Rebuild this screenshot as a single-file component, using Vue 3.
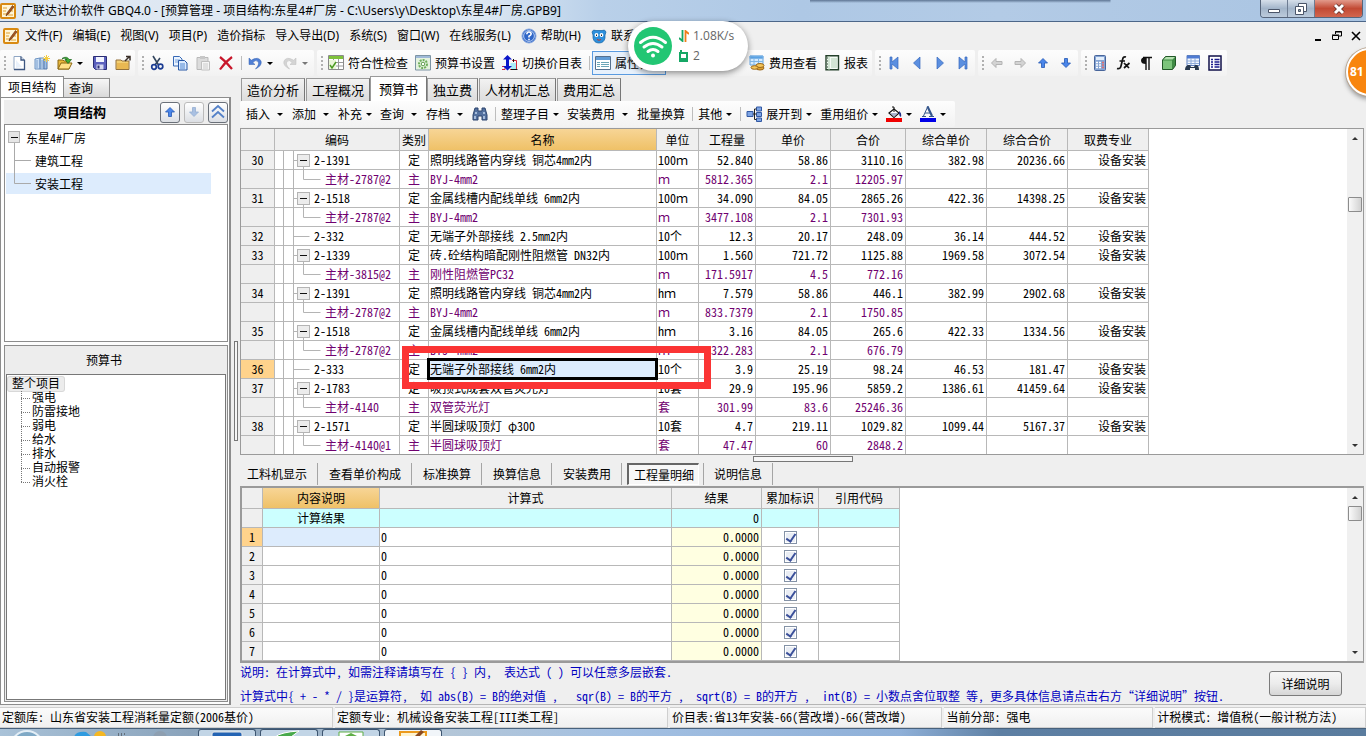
<script setup>
import { ref } from 'vue'

const I = {
  app: '<rect x="1" y="1" width="14" height="14" rx="1" fill="#fff6d8" stroke="#d98a12" stroke-width="2"/><path d="M3 5h4M3 8h3M3 11h5M8 12h5M11 8h2" stroke="#e0a030"/><path d="M12.500 2.500L7 10l-1 3 2.500-2L14 4z" fill="#a8541c" stroke="#5e2c0c" stroke-width=".6"/>',
  doc: '<path d="M3 1.500h7l3.500 3.500v9.500H3z" fill="#fff" stroke="#8fa6c4"/><path d="M10 1.500V5h3.500M13.500 5v9.500H3" fill="none" stroke="#3d5680" stroke-width="1.300"/><path d="M5 13V5l6 7z" fill="#e9f1fb"/>',
  books: '<path d="M1 4l5-1v11H1zM6 3h4v11H6z" fill="#c9def5" stroke="#6c93c2"/><path d="M10 4h3v10h-3z" fill="#9fbfe6" stroke="#5479ab"/><path d="M3 5v8M8 5v8" stroke="#7fa0cd"/><path d="M12.500 0v7M9 3.500h7M10 1l5 5M15 1l-5 5" stroke="#f5cd3e"/>',
  open: '<path d="M1 5h5l1 1h5v8H1z" fill="#e8b73c" stroke="#8a6712"/><path d="M1 14l3-6h11l-3 6z" fill="#ffe187" stroke="#8a6712"/><path d="M5 3.500q5-3 7 1h2.500L11 8.500 8 4.500h2q-2-2-5-1z" fill="#3fae32" stroke="#17631b" stroke-width=".7"/>',
  save: '<path d="M1.500 1.500h13v13h-11l-2-2z" fill="#5b60bd" stroke="#2a2c74"/><path d="M4 2h8v5H4z" fill="#f2f4ff"/><path d="M4.500 9.500h7v5h-7z" fill="#d5d7ef"/><path d="M5.500 10.500h2v3h-2z" fill="#2a2c74"/>',
  folder: '<path d="M1 5h5l1 1h7v8.500H1z" fill="#f3cf72" stroke="#94713a"/><path d="M2 8h11v6H2z" fill="#e9b852"/><path d="M10 6l4-4M11 1.500h4v4" fill="none" stroke="#3a2f28" stroke-width="1.500"/>',
  cut: '<path d="M4 1l5.500 9M11 3L6 10" stroke="#33465f" stroke-width="1.600"/><circle cx="5" cy="12" r="2.300" fill="none" stroke="#1b3c93" stroke-width="1.700"/><circle cx="11.500" cy="11.500" r="2.300" fill="none" stroke="#1b3c93" stroke-width="1.700"/>',
  copy: '<path d="M1.500 1.500h6l2.500 2.500v7H1.500z" fill="#eaf3ff" stroke="#3668b5"/><path d="M3 5h5M3 7h3" stroke="#78a2db"/><path d="M6.500 5.500h6l2.500 2.500v7H6.500z" fill="#dcebff" stroke="#2858a6"/><path d="M8 9h5M8 11h5M8 13h5" stroke="#5288d0"/>',
  paste: '<path d="M2 2.500h11v12H2z" fill="#dcdcdc" stroke="#b9b9b9"/><path d="M5 1h5v3H5z" fill="#c7c7c7"/><path d="M6.500 6.500h8v8.500h-8z" fill="#f6f6f6" stroke="#c0c0c0"/><path d="M8 9h5M8 11h5M8 13h5" stroke="#ccc"/>',
  del: '<path d="M2 2q6 4.500 12 12M14 2Q7 7 2 14.500" fill="none" stroke="#c8172b" stroke-width="2.200"/>',
  undo: '<path d="M2 3v6.500h6L5.800 7.400Q9 4.300 11 6.500q1.800 3-2.500 7.500Q15.500 10.500 14 6 11.500 1 4.300 5.200z" fill="#4f7fd6" stroke="#3561ae" stroke-width=".5"/>',
  redo: '<path d="M14 3v6.500H8l2.200-2.100Q7 4.300 5 6.500q-1.800 3 2.500 7.500Q.5 10.500 2 6 4.500 1 11.700 5.200z" fill="#d4d4d4" stroke="#bdbdbd" stroke-width=".5"/>',
  check: '<path d="M.5.500h15v14H.5z" fill="#fff" stroke="#8a8a8a"/><path d="M1 1h14v3H1z" fill="#7fc23c"/><path d="M1 7.500h14M1 11h14M5.500 4v10M10.500 4v10" stroke="#9a9a9a"/><path d="M1 5h7v9H1z" fill="#eaf6d8"/><path d="M2 10l2 3 4-6" fill="none" stroke="#4c9a22" stroke-width="1.500"/>',
  gear: '<path d="M.5.500h15v14.500H.5z" fill="#e4f2de" stroke="#7c94a4"/><path d="M1 1h14v2H1z" fill="#9fb9d8"/><circle cx="8" cy="9" r="4" fill="none" stroke="#6eae5c" stroke-width="2" stroke-dasharray="2 1"/><circle cx="8" cy="9" r="1.800" fill="#fff" stroke="#5c9e4c"/>',
  swap: '<path d="M10 5.500h4.500v9H8" fill="none" stroke="#d42a3c"/><path d="M8.500 8h5.500v6H8.500z" fill="#a9ecf6"/><path d="M0 11.500h3v3H0" fill="none" stroke="#d42a3c"/><path d="M5.500 0L10 4.500H7v6.500h3L5.500 15.500 1 11h3V4.500H1z" fill="#0b16c9"/><path d="M11.500 4v3M9 14.500h6.500" stroke="#111"/>',
  prop: '<path d="M.5 1.500h15v13H.5z" fill="#fff" stroke="#56718f"/><path d="M1 2h14v3H1z" fill="#5f9bd6"/><path d="M2 7.500h3M2 9.500h3M2 11.500h3M6 7.500h8M6 9.500h8M6 11.500h8" stroke="#6ba5b6"/>',
  fee: '<path d="M1 1h13v9H1z" fill="#d4ebff" stroke="#67a3dc"/><path d="M1 1h13v2.500H1zM5 3v7M9.500 3v7M1 6.500h13" fill="#5aa2e5" stroke="#7fb5e6"/><ellipse cx="11" cy="13" rx="4" ry="2" fill="#dba032" stroke="#9c681b"/><ellipse cx="11" cy="10.500" rx="4" ry="2" fill="#f4c55a" stroke="#9c681b"/><ellipse cx="5.500" cy="12.500" rx="3.500" ry="1.800" fill="#f4c55a" stroke="#9c681b"/>',
  report: '<path d="M2 .7h12.500v14H2z" fill="#f4fbf4" stroke="#24402a" stroke-width="1.400"/><path d="M5 1v14" stroke="#b1d0b5"/><path d="M7 4h6M7 6h6M7 8h6M7 10h6M7 12h6" stroke="#b1d0b5"/><path d="M3 3h1M3 6h1M3 9h1M3 12h1" stroke="#24402a"/>',
  first: '<path d="M4 2h2v5l6-5v12L6 9v5H4z" fill="#5b8fe0" stroke="#3768bd" stroke-width=".7"/>',
  prev: '<path d="M11 2v12L4.500 8z" fill="#5b8fe0" stroke="#3768bd" stroke-width=".7"/>',
  next: '<path d="M5 2v12l6.500-6z" fill="#5b8fe0" stroke="#3768bd" stroke-width=".7"/>',
  last: '<path d="M12 2h-2v5L4 2v12l6-5v5h2z" fill="#5b8fe0" stroke="#3768bd" stroke-width=".7"/>',
  left: '<path d="M2.500 8L7 3.500v3h6v3H7v3z" fill="#d3d3d3" stroke="#b4b4b4"/>',
  right: '<path d="M13.500 8L9 3.500v3H3v3h6v3z" fill="#d3d3d3" stroke="#b4b4b4"/>',
  up: '<path d="M8 3.500L12.500 8h-3v4.500h-3V8h-3z" fill="#4a86ea" stroke="#2558b4" stroke-width=".8"/>',
  down: '<path d="M8 12.500L3.500 8h3V3.500h3V8h3z" fill="#4a86ea" stroke="#2558b4" stroke-width=".8"/>',
  downpale: '<path d="M8 12.500L3.500 8h3V3.500h3V8h3z" fill="#a9c0e2" stroke="#96aed2" stroke-width=".8"/>',
  chev: '<path d="M2 7.500L8 2l6 5.500M2 13.500L8 8l6 5.500" fill="none" stroke="#5481c8" stroke-width="1.800"/>',
  calc: '<rect x="2.500" y=".5" width="11" height="15" rx="1" fill="#86a5d4" stroke="#48659a"/><path d="M4 2h8v3H4z" fill="#e3eefb"/><path d="M4 7.500h2M7 7.500h2M4 10h2M7 10h2M4 12.500h2M7 12.500h2" stroke="#fff" stroke-width="1.500"/><path d="M10 7.500h2M10 10h2M10 12.500h2" stroke="#e06d6d" stroke-width="1.500"/>',
  fx: '<path d="M11 2q-3-1-3.500 3L6 11q-.8 3.500-4 2.500M4.500 6h5.500M9 8l5 5M14.500 8L9 13" fill="none" stroke="#151515" stroke-width="1.700"/>',
  para: '<path d="M8 2v13M11 2v13M5 2.500h9" stroke="#111" stroke-width="1.400"/><path d="M8 2v7Q3 9 3 5.500T8 2z" fill="#111"/>',
  cube: '<path d="M1.500 5l3-3.500h10v9l-3 4h-10z" fill="#3f8b45" stroke="#215727"/><path d="M2 5.500h9V14H2z" fill="#7cc47b"/><path d="M2.500 4.500l2.500-2.500h9l-2.500 2.500z" fill="#b4e0af"/>',
  find: '<path d="M3 .5h12.500v10H3z" fill="#f3f8ff" stroke="#5c7fc0"/><path d="M3 1h12v2.500H3z" fill="#4f7bd3"/><path d="M3 6h12M3 8.500h12M7 3v7M11 3v7" stroke="#8facda"/><path d="M1 15q0-4 3-5h2l1 2h3l1-2h2q2 1 2 5h-4v-2H6v2z" fill="#27384e"/>',
  list: '<path d="M2 1h12v14H2z" fill="#fff" stroke="#10104a" stroke-width="1.500"/><path d="M4 4.500h2M4 7h2M4 9.500h2M4 12h2M7.500 4.500h5M7.500 7h5M7.500 9.500h5M7.500 12h5" stroke="#1a1a8c" stroke-width="1.300"/>',
  bino: '<path d="M3 2h3v3h4V2h3l2 7v5h-5v-4H6v4H1V9z" fill="#54719f" stroke="#2c456f"/><path d="M3 7h2M11 7h2M3 10v3M12 10v3" stroke="#c0d3ee" stroke-width="1.500"/>',
  tree: '<path d="M1 5.500h6v5H1zM10.500 1h5v4h-5zM10.500 6.500h5v4h-5zM10.500 12h5v3.500h-5z" fill="#7da4e4" stroke="#3259a3"/><path d="M7 8h3.500M8.500 3v10.500M8.500 3h2M8.500 13.500h2" stroke="#222" fill="none"/>',
  fill: '<path d="M3 7l5-4 5 4-5 4.500z" fill="#fff" stroke="#111" stroke-width="1.200"/><path d="M4 7h8l-4 4z" fill="#aab4cf"/><path d="M8 6V1H6" fill="none" stroke="#111"/><path d="M13 5q3 2 2 6-2-1-2-4z" fill="#1b2b84"/><path d="M0 12h16v4H0z" fill="#f00000"/>',
  fontc: '<path d="M3.500 10L8 0" fill="none" stroke="#35568c"/><path d="M7.500 .5l4.500 9.500" stroke="#35568c" stroke-width="2.200"/><path d="M5 7h6M2 10.500h4M9 10.500h5" fill="none" stroke="#35568c"/><path d="M0 12h16v4H0z" fill="#0000e8"/>',
  help: '<circle cx="8" cy="8" r="7" fill="#2f66c8" stroke="#8aa9df"/><circle cx="8" cy="8" r="5.400" fill="none" stroke="#dce8fb" stroke-width=".8"/><path d="M5.800 6.200Q6 4 8 4t2.200 2Q10 7.300 8 8.300v1.200M8 10.700v1.600" fill="none" stroke="#fff" stroke-width="1.600"/>',
  pet: '<path d="M1 4q1-3 4-1.500h6Q14 1 15 4l-1 3v3q-1 5-6 5t-6-5V7z" fill="#2d8fdc" stroke="#1463a4" stroke-width=".7"/><circle cx="5.500" cy="7" r="1.900" fill="#fff"/><circle cx="10.500" cy="7" r="1.900" fill="#fff"/><path d="M5.500 6.500v1.500M10.500 6.500v1.500" stroke="#222"/><path d="M6 11.500q2 1.500 4 0" fill="none" stroke="#b93b2e"/>',
}

const menusA = ['文件(F)', '编辑(E)', '视图(V)', '项目(P)', '造价指标', '导入导出(D)', '系统(S)', '窗口(W)', '在线服务(L)']

const bars = [
  [{ i: 'doc' }, { i: 'books' }, { i: 'open', c: 1 }, { i: 'save' }, { i: 'folder' }],
  [{ i: 'cut' }, { i: 'copy' }, { i: 'paste' }, { i: 'del' }, { s: 1 }, { i: 'undo', c: 1 }, { i: 'redo', c: 1, dim: 1 }],
  [{ i: 'check', t: '符合性检查' }, { i: 'gear', t: '预算书设置' }, { i: 'swap', t: '切换价目表' }, { s: 1 }, { i: 'prop', t: '属性窗口', on: 1 }, { gap: 1 }, { i: 'fee', t: '费用查看' }, { i: 'report', t: '报表' }],
  [{ i: 'first' }, { i: 'prev' }, { i: 'next' }, { i: 'last' }],
  [{ i: 'left' }, { i: 'right' }, { i: 'up' }, { i: 'down' }],
  [{ i: 'calc' }, { i: 'fx' }, { i: 'para' }, { i: 'cube' }, { i: 'find' }, { i: 'list' }],
]

const tools = [
  { t: '插入', c: 2 }, { t: '添加', c: 2 }, { t: '补充', c: 1 }, { t: '查询', c: 2 }, { t: '存档', c: 2 }, { i: 'bino' }, { s: 1 },
  { t: '整理子目', c: 1 }, { t: '安装费用', c: 2 }, { t: '批量换算' }, { s: 1 }, { t: '其他', c: 1 }, { s: 1 },
  { i: 'tree', t: '展开到', c: 1 }, { t: '重用组价', c: 1 }, { i: 'fill', c: 1 }, { i: 'fontc', c: 1 },
]

const pageTabs = ['造价分析', '工程概况', '预算书', '独立费', '人材机汇总', '费用汇总']
const activePage = ref('预算书')
const detailTabs = ['工料机显示', '查看单价构成', '标准换算', '换算信息', '安装费用', '工程量明细', '说明信息']
const activeDetail = ref('工程量明细')
const sections = ['强电', '防雷接地', '弱电', '给水', '排水', '自动报警', '消火栓']

const heads = ['', '编码', '类别', '名称', '单位', '工程量', '单价', '合价', '综合单价', '综合合价', '取费专业']
const P = '设备安装'
const rows = [
  ['30', '2-1391', '定', '照明线路管内穿线 铜芯4mm2内', '100ｍ', '52.840', '58.86', '3110.16', '382.98', '20236.66', P],
  ['', '主材-2787@2', '主', 'BYJ-4mm2', 'ｍ', '5812.365', '2.1', '12205.97', '', '', ''],
  ['31', '2-1518', '定', '金属线槽内配线单线 6mm2内', '100ｍ', '34.090', '84.05', '2865.26', '422.36', '14398.25', P],
  ['', '主材-2787@2', '主', 'BYJ-4mm2', 'ｍ', '3477.108', '2.1', '7301.93', '', '', ''],
  ['32', '2-332', '定', '无端子外部接线 2.5mm2内', '10个', '12.3', '20.17', '248.09', '36.14', '444.52', P],
  ['33', '2-1339', '定', '砖.砼结构暗配刚性阻燃管 DN32内', '100ｍ', '1.560', '721.72', '1125.88', '1969.58', '3072.54', P],
  ['', '主材-3815@2', '主', '刚性阻燃管PC32', 'ｍ', '171.5917', '4.5', '772.16', '', '', ''],
  ['34', '2-1391', '定', '照明线路管内穿线 铜芯4mm2内', 'hｍ', '7.579', '58.86', '446.1', '382.99', '2902.68', P],
  ['', '主材-2787@2', '主', 'BYJ-4mm2', 'ｍ', '833.7379', '2.1', '1750.85', '', '', ''],
  ['35', '2-1518', '定', '金属线槽内配线单线 6mm2内', 'hｍ', '3.16', '84.05', '265.6', '422.33', '1334.56', P],
  ['', '主材-2787@2', '主', 'BYJ-4mm2', 'ｍ', '322.283', '2.1', '676.79', '', '', ''],
  ['36', '2-333', '定', '无端子外部接线 6mm2内', '10个', '3.9', '25.19', '98.24', '46.53', '181.47', P],
  ['37', '2-1783', '定', '吸顶式成套双管荧光灯', '10套', '29.9', '195.96', '5859.2', '1386.61', '41459.64', P],
  ['', '主材-4140', '主', '双管荧光灯', '套', '301.99', '83.6', '25246.36', '', '', ''],
  ['38', '2-1571', '定', '半圆球吸顶灯 φ300', '10套', '4.7', '219.11', '1029.82', '1099.44', '5167.37', P],
  ['', '主材-4140@1', '主', '半圆球吸顶灯', '套', '47.47', '60', '2848.2', '', '', ''],
]
const kind = (i) => (rows[i][0] === '' ? 'child' : rows[i + 1] && rows[i + 1][0] === '' ? 'parent' : 'leaf')
const checks = ref([true, true, true, true, true, true, true])
</script>

<template>
  <div class="shell">
    <header class="titlebar">
      <svg class="ic" viewBox="0 0 16 16" v-html="I.app"></svg>
      <h1>广联达计价软件 GBQ4.0 - [预算管理 - 项目结构:东星4#厂房 - C:\Users\y\Desktop\东星4#厂房.GPB9]</h1>
      <div class="winbtns">
        <button class="wb" aria-label="最小化"><svg width="14" height="12" viewBox="0 0 14 12"><path d="M1.500 6.500h11v3h-11z" fill="#fff" stroke="#4a5569" /></svg></button>
        <button class="wb" aria-label="还原"><svg width="14" height="14" viewBox="0 0 14 14"><path d="M4.500 1.500h8v8h-8z" fill="#fff" stroke="#4a5569" /><path d="M1.500 4.500h8v8h-8z" fill="#fff" stroke="#4a5569" /><path d="M4.500 7.500h2v2h-2z" fill="#9aa" stroke="#4a5569" /></svg></button>
        <button class="wb close" aria-label="关闭"><svg width="14" height="12" viewBox="0 0 14 12"><path d="M3 2l8 8M11 2l-8 8" stroke="#5b2a24" stroke-width="4.500" /><path d="M3 2l8 8M11 2l-8 8" stroke="#fff" stroke-width="3" /></svg></button>
      </div>
    </header>

    <nav class="menubar">
      <svg class="ic" viewBox="0 0 16 16" v-html="I.app"></svg>
      <button v-for="m in menusA" :key="m">{{ m }}</button>
      <button class="withic"><svg class="ic" viewBox="0 0 16 16" v-html="I.help"></svg>帮助(H)</button>
      <button class="withic"><svg class="ic" viewBox="0 0 16 16" v-html="I.pet"></svg>联系我们</button>
      <div class="mdi">
        <svg width="10" height="12" viewBox="0 0 10 12"><path d="M2 10h6" stroke="#000" stroke-width="2" /></svg>
        <svg width="10" height="12" viewBox="0 0 10 12"><path d="M3.500 4V1.500h6V6H7M3 2h7" fill="none" stroke="#000" /><path d="M.5 5.500h6v4h-6zM0 5h7" fill="none" stroke="#000" /></svg>
        <svg width="10" height="12" viewBox="0 0 10 12"><path d="M1 2l8 8M9 2l-8 8" stroke="#000" stroke-width="1.600" /></svg>
      </div>
    </nav>

    <div class="toolbar">
      <div v-for="(b, bi) in bars" :key="bi" class="group">
        <i class="grip"></i>
        <template v-for="(t, ti) in b" :key="ti">
          <i v-if="t.s" class="sep"></i>
          <i v-else-if="t.gap" class="gap"></i>
          <button v-else class="tb" :class="{ on: t.on }" :aria-label="t.t || t.i">
            <svg class="ic" viewBox="0 0 16 16" v-html="I[t.i]"></svg><span v-if="t.t">{{ t.t }}</span><i v-if="t.c" class="caret" :class="{ dim: t.dim }"></i>
          </button>
        </template>
      </div>
    </div>

    <main class="main">
      <aside class="side">
        <div class="sidetabs"><button class="act">项目结构</button><button>查询</button></div>
        <div class="sidebody">
          <div class="sidehead">
            <h2>项目结构</h2>
            <button aria-label="上移"><svg class="ic" viewBox="0 0 16 16" v-html="I.up"></svg></button>
            <button class="pale" aria-label="下移"><svg class="ic" viewBox="0 0 16 16" v-html="I.downpale"></svg></button>
            <button aria-label="收起"><svg class="ic" viewBox="0 0 16 16" v-html="I.chev"></svg></button>
          </div>
          <ul class="tree">
            <li><svg width="16" height="23" viewBox="0 0 16 23"><path d="M8.500 17v6" stroke="#aaa" /><rect x="2.500" y="5.500" width="11" height="11" fill="#e6e6e6" stroke="#b4b4b4" /><path d="M5 11.500h7" stroke="#111" /></svg><span>东星4#厂房</span></li>
            <li><svg width="25" height="23" viewBox="0 0 25 23"><path d="M8.500 0v23M8.500 11.500H25" stroke="#aaa" fill="none" /></svg><span>建筑工程</span></li>
            <li class="sel"><svg width="25" height="23" viewBox="0 0 25 23"><path d="M8.500 0v11.500H25" stroke="#aaa" fill="none" /></svg><span>安装工程</span></li>
          </ul>
          <section class="book">
            <h3>预算书</h3>
            <ul>
              <li class="root"><span>整个项目</span></li>
              <li v-for="(s, i) in sections" :key="s"><svg width="24" height="14" viewBox="0 0 24 14"><path :d="i === 6 ? 'M13.500 0v7' : 'M13.500 0v14'" stroke="#777" stroke-dasharray="1 1" /><path d="M13 7.500h10" stroke="#777" stroke-dasharray="1 1" /></svg><span>{{ s }}</span></li>
            </ul>
          </section>
        </div>
      </aside>
      <div class="vsplit"><i></i></div>

      <section class="work">
        <div class="pagetabs">
          <button v-for="t in pageTabs" :key="t" :class="{ act: t === activePage }" @click="activePage = t">{{ t }}</button>
        </div>
        <div class="tools">
          <div class="group">
            <template v-for="(t, ti) in tools" :key="ti">
              <i v-if="t.s" class="sep"></i>
              <button v-else class="tb" :class="{ split: t.c === 2 }" :aria-label="t.t || t.i">
                <svg v-if="t.i" class="ic" viewBox="0 0 16 16" v-html="I[t.i]"></svg><span v-if="t.t">{{ t.t }}</span><i v-if="t.c" class="caret"></i>
              </button>
            </template>
          </div>
        </div>

        <div class="gridbox upper">
          <div class="gridarea">
            <table class="grid g1">
              <colgroup><col v-for="n in 11" :key="n" :class="'c' + n" /></colgroup>
              <thead><tr><th v-for="(h, i) in heads" :key="i" :class="{ hot: i === 3 }">{{ h }}</th></tr></thead>
              <tbody>
                <tr v-for="(r, i) in rows" :key="i" :class="{ mat: !r[0] }">
                  <th :class="{ cur: r[0] === '36' }">{{ r[0] }}</th>
                  <td class="code"><div>
                    <svg v-if="kind(i) === 'parent'" width="37" height="19" viewBox="0 0 37 19"><path d="M8.500 0v19M18.500 0v19M18.500 9.500h4M28.500 15v4" stroke="#b4b4b4" /><rect x="22.500" y="3.500" width="12" height="12" fill="#ececec" stroke="#b4b4b4" /><path d="M25 9.500h7" stroke="#111" /></svg>
                    <svg v-else-if="kind(i) === 'leaf'" width="37" height="19" viewBox="0 0 37 19"><path d="M8.500 0v19M18.500 0v19M18.500 9.500h16" stroke="#b4b4b4" /></svg>
                    <svg v-else width="48" height="19" viewBox="0 0 48 19"><path d="M8.500 0v19M18.500 0v19M28.500 0v9.500h17" stroke="#b4b4b4" fill="none" /></svg>
                    <span>{{ r[1] }}</span></div></td>
                  <td class="mid">{{ r[2] }}</td>
                  <td class="txt" :class="{ focus: r[0] === '36' }">{{ r[3] }}</td>
                  <td class="txt">{{ r[4] }}</td>
                  <td v-for="k in 6" :key="k" class="num">{{ r[4 + k] }}</td>
                </tr>
              </tbody>
            </table>
            <i class="mark"></i>
          </div>
          <div class="scroll s1"><button class="su" aria-label="向上"></button><i class="thumb"></i><button class="sd" aria-label="向下"></button></div>
        </div>

        <div class="hsplit"><i></i></div>
        <div class="detailtabs">
          <button v-for="t in detailTabs" :key="t" :class="{ act: t === activeDetail }" @click="activeDetail = t">{{ t }}</button>
        </div>

        <div class="gridbox lower">
          <div class="gridarea">
            <table class="grid g2">
              <colgroup><col v-for="n in 6" :key="n" :class="'d' + n" /></colgroup>
              <thead><tr><th></th><th class="hot">内容说明</th><th>计算式</th><th>结果</th><th>累加标识</th><th>引用代码</th></tr></thead>
              <tbody>
                <tr class="sum"><th></th><td class="mid">计算结果</td><td></td><td class="num">0</td><td></td><td></td></tr>
                <tr v-for="n in 7" :key="n">
                  <th :class="{ cur: n === 1 }">{{ n }}</th><td :class="{ pick: n === 1 }"></td><td class="txt">0</td><td class="num res">0.0000</td>
                  <td class="mid"><input type="checkbox" v-model="checks[n - 1]" :aria-label="'累加标识 ' + n" /></td><td></td>
                </tr>
              </tbody>
            </table>
          </div>
          <div class="scroll s2"><button class="su" aria-label="向上"></button><i class="thumb"></i><button class="sd" aria-label="向下"></button></div>
        </div>

        <div class="notes">
          <div>
            <p>说明: 在计算式中, 如需注释请填写在 { } 内,&nbsp; 表达式 ( ) 可以任意多层嵌套.</p>
            <p>计算式中{ + - * / }是运算符,&nbsp; 如 abs(B) = B的绝对值 ,&nbsp;&nbsp; sqr(B) = B的平方 ,&nbsp; sqrt(B) = B的开方 ,&nbsp; int(B) = 小数点舍位取整 等, 更多具体信息请点击右方“详细说明”按钮.</p>
          </div>
          <button>详细说明</button>
        </div>
      </section>
    </main>

    <footer class="status">
      <span>定额库: 山东省安装工程消耗量定额(2006基价)</span>
      <span>定额专业: 机械设备安装工程[III类工程]</span>
      <span>价目表:省13年安装-66(营改增)-66(营改增)</span>
      <span>当前分部: 强电</span>
      <span>计税模式: 增值税(一般计税方法)</span>
    </footer>
    <div class="taskbar">
      <svg width="190" height="8" viewBox="0 0 190 8"><circle cx="27" cy="18" r="16" fill="#7fa9c6" stroke="#e3eef6" stroke-width="2" /><path d="M74 8q2-6 12-5l6 5z" fill="#2f9be0" /><circle cx="100" cy="8" r="6" fill="#f5b722" /><path d="M118 5h1M121 5h1M124 5h1M118 7h1M121 7h1" stroke="#333" /><circle cx="160" cy="9" r="7" fill="#8d9aa6" opacity=".6" /></svg>
      <span class="task"><svg width="32" height="7" viewBox="0 0 32 7"><path d="M1 7V4q0-2 2-2h26q2 0 2 2v3z" fill="#2464b4" stroke="#e8e8e8" /></svg></span>
      <span class="task"><svg width="32" height="7" viewBox="0 0 32 7"><path d="M2 7q6-5 24-6l-8 6z" fill="#49a94c" stroke="#fff" /></svg></span>
      <span class="task"><svg width="32" height="7" viewBox="0 0 32 7"><path d="M4 7V2h24v5z" fill="#fff" stroke="#5fae47" /><path d="M8 7l8-4 8 4z" fill="#5fae47" /></svg></span>
      <span class="task hot"><svg width="32" height="7" viewBox="0 0 32 7"><path d="M3 7V2h26v5z" fill="#fff3cf" stroke="#ec9a1c" stroke-width="2" /><path d="M17 7l7-7 3 2-5 5z" fill="#8a4a20" /></svg></span>
    </div>

    <div class="wifi">
      <svg width="38" height="38" viewBox="0 0 38 38"><circle cx="19" cy="19" r="19" fill="#22c673" /><g fill="none" stroke="#fff" stroke-width="3" stroke-linecap="round"><path d="M6.500 15.500q12.500-10.500 25 0M10 20q9-7 18 0M14 24.500q5-4 10 0" /></g><circle cx="19" cy="28.500" r="2" fill="#fff" /></svg>
      <dl>
        <dt><svg width="10" height="12" viewBox="0 0 10 12"><path d="M3.500 0v11L0 8" fill="none" stroke="#16a765" stroke-width="1.800" /><path d="M6.500 12V1L10 4" fill="none" stroke="#ef7d1a" stroke-width="1.800" /></svg></dt><dd>1.08K/s</dd>
        <dt><svg width="10" height="12" viewBox="0 0 10 12"><path d="M1 3h7v8H1z" fill="#fff" stroke="#16a765" stroke-width="2" /><path d="M0 8h9v4H0zM1 0h2v3H1z" fill="#16a765" /></svg></dt><dd>2</dd>
      </dl>
    </div>
    <div class="badge"><b>81</b></div>
  </div>
</template>

<style>
html, body { margin: 0; background: #efefef; }
</style>

<style scoped>
* { box-sizing: border-box; }
.shell {
  position: relative; min-height: 100vh; display: flex; flex-direction: column; overflow: hidden;
  background: #efefef; color: #000; font: 12px/16px "Noto Sans Mono CJK SC", "Noto Sans CJK SC", sans-serif;
}
button { margin: 0; padding: 0; border: 0; background: none; color: inherit; font: inherit; white-space: nowrap; }
h1, h2, h3, p, ul, dl, dd { margin: 0; padding: 0; }
ul { list-style: none; }
svg { display: block; flex: none; }
.ic { width: 16px; height: 16px; }

.titlebar {
  display: flex; align-items: center; height: 22px; padding-right: 3px; border-bottom: 1px solid #4d6789;
  background:
    linear-gradient(#5f7694, rgba(95, 118, 148, 0)) 60% 0 / 22% 3px no-repeat,
    linear-gradient(90deg, #dfe8f2 0, #dde8f3 480px, #b9d0e9 600px, #aec8e5 800px, #b3cbe6 1000px, #a9c4e2 100%);
  background-position: 76% 0, 0 0;
}
.titlebar h1 { flex: 1; padding-left: 5px; font: 12px/20px "Noto Sans", "Noto Sans CJK SC", sans-serif; white-space: nowrap; }
.winbtns { display: flex; align-self: flex-start; height: 18px; border: 1px solid #56657b; border-top: 0; border-radius: 0 0 4px 4px; overflow: hidden; }
.wb { display: flex; align-items: center; justify-content: center; width: 27px; background: linear-gradient(#d6dfea, #a3b5ca 50%, #bccbdc); border-right: 1px solid #6d7c92; }
.wb.close { width: 47px; border-right: 0; background: linear-gradient(#e29a8b, #c24a34 50%, #d2664e); }

.menubar { display: flex; align-items: center; gap: 10px; height: 28px; padding: 0 5px 0 3px; font: 12px/16px "Noto Sans", "Noto Sans CJK SC", sans-serif; }
.menubar .ic { margin-right: -4px; }
.withic { display: flex; align-items: center; gap: 8px; }
.mdi { display: flex; gap: 9px; margin-left: auto; }

.toolbar { display: flex; height: 26px; gap: 3px; }
.group { display: flex; align-items: center; background: linear-gradient(#fdfdfd, #f2f2f2); border-radius: 2px; }
.grip { width: 2px; height: 15px; margin: 0 2px 0 4px; background: repeating-linear-gradient(#b0b0b0 0 2px, transparent 2px 4px); }
.tb { display: flex; align-items: center; height: 24px; padding: 0 3px; margin-right: 1px; }
.tb .ic + span { margin-left: 4px; }
.tb.on { border: 1px solid #5a9be0; background: #e7f1fc; padding: 0 2px; }
.sep { width: 1px; height: 14px; margin: 0 2px 0 3px; background: #bdbdbd; }
.gap { width: 79px; }
.caret { width: 0; height: 0; margin-left: 4px; margin-right: 2px; border: 3px solid transparent; border-top-color: #000; border-bottom: 0; }
.caret.dim { border-top-color: #777; }
.tools .caret { margin-right: 1px; }
.tools .split .caret { margin-left: 7px; margin-right: 2px; }

.main { flex: 1; display: flex; min-width: 0; padding-bottom: 2px; }
.side { flex: none; width: 231px; display: flex; flex-direction: column; }
.sidetabs { display: flex; align-items: flex-end; height: 21px; }
.sidetabs button { height: 19px; padding: 0 16px 0 5px; border: 1px solid #8c8c8c; border-left: 0; border-bottom: 0; background: linear-gradient(#f6f6f6, #d9d9d9); }
.sidetabs .act { height: 21px; padding: 0 7px; border-left: 1px solid #8c8c8c; background: #fff; }
.sidebody { flex: 1; display: flex; flex-direction: column; border: 1px solid #8c8c8c; border-right-width: 2px; padding: 2px 1px 2px 3px; background: #fdfdfd; }
.sidehead { display: flex; align-items: center; gap: 4px; height: 24px; background: #ededed; }
.sidehead h2 { flex: 1; text-align: center; font-size: 13px; line-height: 16px; font-weight: 700; }
.sidehead button { display: grid; place-items: center; width: 20px; height: 21px; border: 1px solid #6a7079; border-radius: 3px; background: linear-gradient(#fff, #dcdfe4); }
.sidehead .pale { border-color: #bbb; }
.tree { height: 218px; padding-top: 1px; border: 1px solid #8c8c8c; background: #fff; }
.tree li { display: flex; align-items: center; height: 23px; margin: 0 16px 0 1px; }
.tree span { padding-left: 4px; }
.sel { background: linear-gradient(#ddecfd, #ddecfd) 0 1px / 100% 21px no-repeat; }
.book { flex: 1; display: flex; flex-direction: column; margin-top: 3px; padding: 0 1px 1px; border: 1px solid #8c8c8c; background: #ededed; }
.book h3 { height: 28px; padding-right: 24px; font-size: 12px; line-height: 28px; font-weight: 400; text-align: center; }
.book ul { flex: 1; padding-top: 2px; border: 1px solid #777; background: #fff; font-family: "Liberation Sans", "Noto Sans CJK SC", sans-serif; }
.book li { display: flex; align-items: center; height: 14px; line-height: 14px; padding-left: 1px; }
.book .root span { padding: 0 4px; border-radius: 2px; background: #ececec; box-shadow: 0 0 0 1px #d8d8d8; }
.vsplit { flex: none; width: 9px; display: flex; align-items: center; padding-left: 3px; }
.vsplit i { width: 4px; height: 100px; border: 1px solid #777; background: #f6f6f6; }

.work { flex: 1; min-width: 0; display: flex; flex-direction: column; }
.pagetabs { display: flex; align-items: flex-end; height: 25px; padding-left: 1px; font-size: 13px; }
.pagetabs button { height: 23px; padding: 0 5px; margin-right: 1px; border: 1px solid #9a9a9a; border-bottom: 0; border-right-color: #777; background: linear-gradient(#f2f2f2, #dcdcdc); line-height: 22px; }
.pagetabs .act { height: 25px; padding: 0 8px; margin: 0 0 0 -1px; background: #fff; }
.tools { display: flex; height: 27px; padding-bottom: 1px; }
.tools .group { padding: 0 4px 0 3px; }

.gridbox { display: flex; border: 1px solid #9a9a9a; margin-right: 2px; background: #fff; min-width: 0; }
.gridarea { position: relative; flex: 1; min-width: 0; overflow: hidden; }
.upper { height: 327px; }
.lower { flex: 1; border-width: 2px 1px; border-left-width: 2px; min-height: 175px; }
.grid { table-layout: fixed; border-collapse: separate; border-spacing: 0; line-height: 16px; }
.grid th { font-weight: 400; background: #efefef; }
.grid th, .grid td { padding: 0; height: 19px; border-right: 1px solid #b8b8b8; border-bottom: 1px solid #b8b8b8; white-space: nowrap; }
.grid thead th { height: 21px; }
.g1 thead th { height: 22px; }
.grid .hot { background: linear-gradient(#f7d596, #efc167); }
.grid .cur { background: #ffd38c; }
.g1 { width: 908px; }
.g2 { width: 658px; }
.c1 { width: 34px; } .c2 { width: 125px; } .c3 { width: 29px; } .c4 { width: 228px; } .c5 { width: 42px; } .c6 { width: 57px; }
.c7, .c8 { width: 75px; } .c9, .c10, .c11 { width: 81px; }
.d1 { width: 21px; } .d2 { width: 117px; } .d3 { width: 292px; } .d4 { width: 90px; } .d5 { width: 57px; } .d6 { width: 81px; }
.mat td { color: #700070; }
.code div { display: flex; align-items: center; height: 18px; }
.code span { padding-left: 2px; }
.mid { text-align: center; }
.grid .txt { padding-left: 1px; }
.grid .num { padding-right: 2px; text-align: right; }
.focus { position: relative; background: #ddecfd; }
.focus::after { content: ""; position: absolute; inset: -2px; border: 3px solid #000; }
.mark { position: absolute; left: 161px; top: 217px; width: 309px; height: 43px; border: 7px solid #fb3434; }
.sum td { background: #ccffff; }
.res { background: #ffffe1; }
.pick { background: #ddecfd; }
.mid input { appearance: none; display: block; position: relative; width: 13px; height: 13px; margin: 0 auto; border: 1px solid #8492a6; background: #e9edf4; box-shadow: inset 0 0 0 1px #fff; }
.mid input:checked::after { content: ""; position: absolute; left: 3px; top: 0; width: 4px; height: 8px; border: solid #3a4f9a; border-width: 0 2px 2px 0; transform: rotate(35deg); }

.scroll { flex: none; width: 16px; display: flex; flex-direction: column; background: #f0f0f0; }
.scroll button { flex: none; height: 18px; display: grid; place-items: center; }
.scroll button::after { content: ""; border: 3px solid transparent; }
.su::after { border-bottom-color: #333 !important; border-top: 0 !important; }
.sd { margin-top: auto; }
.sd::after { border-top-color: #333 !important; border-bottom: 0 !important; }
.thumb { height: 15px; margin: 0 1px; border: 1px solid #8c8c8c; border-radius: 1px; background: linear-gradient(90deg, #fafafa, #d2d2d2); }
.s1 .thumb { margin-top: 50px; }

.hsplit { height: 7px; display: flex; justify-content: center; padding-top: 1px; }
.hsplit i { width: 100px; height: 6px; border: 1px solid #777; background: #f6f6f6; }
.detailtabs { display: flex; align-items: center; height: 24px; margin-left: -4px; }
.detailtabs button { height: 22px; padding: 0 10px 0 11px; border-right: 1px solid #a5a5a5; }
.detailtabs .act { margin: 0 4px 0 5px; padding: 0 4px 0 5px; border: 1px solid #fff; border-top: 2px solid #666; border-left: 2px solid #666; background: #f7f7f7; }
.detailtabs .act + button { padding-left: 10px; border-left: 1px solid #a5a5a5; }

.notes { display: flex; align-items: center; justify-content: space-between; height: 42px; padding-right: 24px; color: #0000c0; border-bottom: 1px solid #b5b5b5; }
.notes p { line-height: 24px; height: 24px; white-space: nowrap; }
.notes > div { height: 48px; }
.notes button { flex: none; width: 73px; height: 25px; border: 1px solid #7b7b7b; border-radius: 3px; background: linear-gradient(#f6f6f6, #ececec 50%, #d6d6d6); color: #000; }

.status { display: grid; grid-template-columns: 335fr 335fr 274fr 210fr 212fr; gap: 2px; height: 21px; }
.status span { min-width: 0; padding-left: 2px; border: 1px solid #cfcfcf; border-left: 0; background: linear-gradient(#fbfbfb, #f0f0f0); line-height: 18px; white-space: nowrap; overflow: hidden; }
.taskbar { display: flex; gap: 4px; height: 8px; overflow: hidden; border-top: 1px solid #47617c; background: linear-gradient(90deg, #a9c2d8, #8aa3bb 190px, #b3c6d8 450px, #a3c0e2 620px, #8fb0d8 900px, #5d7fa3 1000px, #5a7c9e); }
.taskbar > svg { margin-right: 4px; }
.task { display: grid; justify-items: center; width: 58px; border: 1px solid #3d5570; border-bottom: 0; border-radius: 3px 3px 0 0; background: #c2d5e6; }
.task.hot { background: #f1f5f9; }

.wifi { position: absolute; left: 628px; top: 21px; display: flex; align-items: center; gap: 7px; width: 120px; height: 50px; padding-left: 6px; border-radius: 25px; background: #fff; box-shadow: 0 2px 6px rgba(0, 0, 0, .45); color: #666; }
.wifi dl { display: grid; grid-template-columns: 10px auto; column-gap: 4px; row-gap: 4px; align-items: center; font: 12px/16px "Open Sans", sans-serif; }
.badge { position: absolute; right: -28px; top: 48px; width: 48px; height: 48px; padding: 16px 0 0 2px; border: 2px solid #fff; border-radius: 50%; background: #f8850e; box-shadow: 0 0 0 1px #b9a48e, 0 3px 5px rgba(0, 0, 0, .4); color: #fff; font: 12px/12px "Open Sans", sans-serif; }
</style>
